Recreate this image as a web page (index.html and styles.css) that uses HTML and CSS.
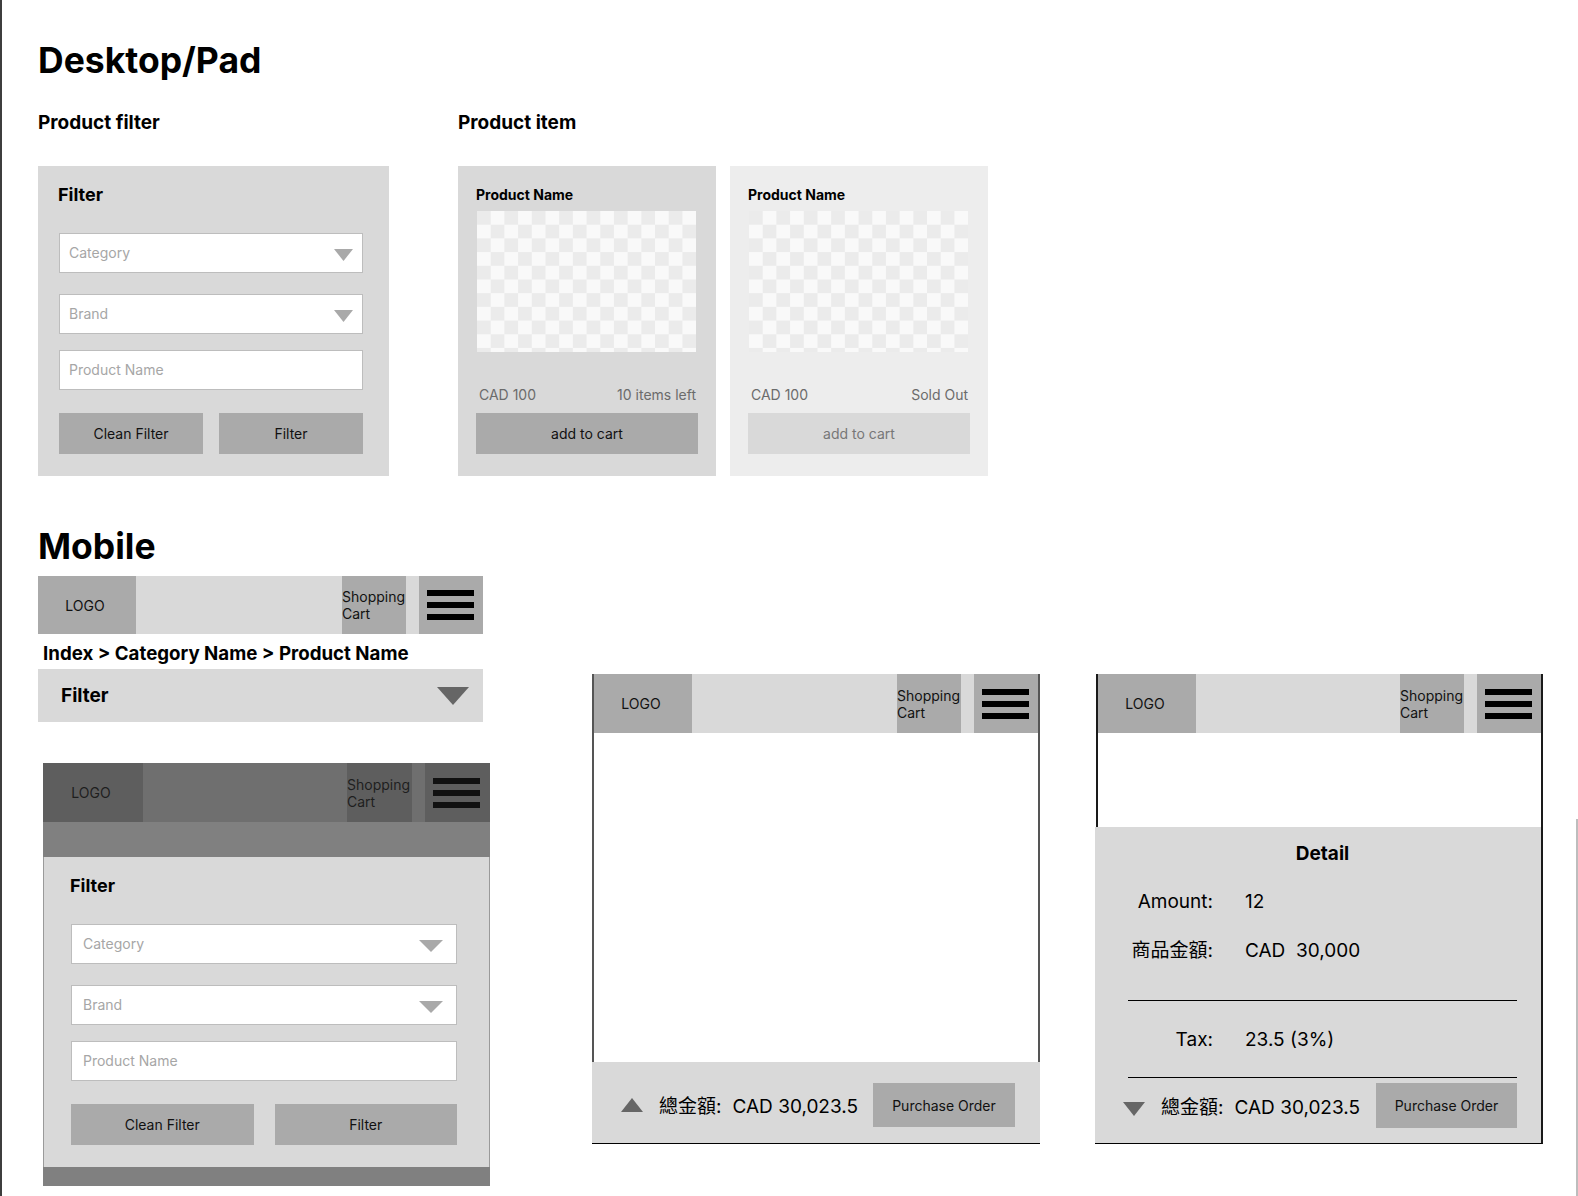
FILE: index.html
```html
<!DOCTYPE html>
<html lang="en">
<head>
<meta charset="utf-8">
<title>Wireframes</title>
<link rel="stylesheet" href="styles.css">
</head>
<body>
<div class="page">
  <h1 class="title">Desktop/Pad</h1>
  <div class="desk-row">
    <section class="desk-col">
      <h2 class="subtitle">Product filter</h2>
      <div class="filter-box">
        <div class="fb-title">Filter</div>
        <div class="field field-first"><span>Category</span><svg class="caret" width="19" height="12" viewBox="0 0 19 12"><polygon points="0,0 19,0 9.5,12" fill="#a9a9a9"/></svg></div>
        <div class="field field-second"><span>Brand</span><svg class="caret" width="19" height="12" viewBox="0 0 19 12"><polygon points="0,0 19,0 9.5,12" fill="#a9a9a9"/></svg></div>
        <div class="field field-third"><span>Product Name</span></div>
        <div class="fb-buttons">
          <div class="btn">Clean Filter</div>
          <div class="btn">Filter</div>
        </div>
      </div>
    </section>
    <section class="desk-col">
      <h2 class="subtitle">Product item</h2>
      <div class="cards">
        <div class="card">
          <div class="card-name">Product Name</div>
          <div class="card-img"></div>
          <div class="card-meta"><span>CAD 100</span><span>10 items left</span></div>
          <div class="btn card-btn">add to cart</div>
        </div>
        <div class="card card-soft">
          <div class="card-name">Product Name</div>
          <div class="card-img"></div>
          <div class="card-meta"><span>CAD 100</span><span>Sold Out</span></div>
          <div class="btn card-btn btn-disabled">add to cart</div>
        </div>
      </div>
    </section>
  </div>

  <h1 class="title title-mobile">Mobile</h1>
  <div class="mob-row">
    <div class="mob-left">
      <div class="topbar">
        <div class="tb-logo">LOGO</div>
        <div class="tb-space"></div>
        <div class="tb-cart">Shopping<br>Cart</div>
        <div class="tb-menu"><i></i><i></i><i></i></div>
      </div>
      <div class="crumb">Index &gt; Category Name &gt; Product Name</div>
      <div class="filterbar"><span>Filter</span><svg width="32" height="18" viewBox="0 0 32 18"><polygon points="0,0 32,0 16,18" fill="#666"/></svg></div>

      <div class="overlay">
        <div class="topbar topbar-dim">
          <div class="tb-logo">LOGO</div>
          <div class="tb-space"></div>
          <div class="tb-cart">Shopping<br>Cart</div>
          <div class="tb-menu"><i></i><i></i><i></i></div>
        </div>
        <div class="ov-band"></div>
        <div class="filter-box filter-box-mobile">
          <div class="fb-title">Filter</div>
          <div class="field field-first"><span>Category</span><svg class="caret" width="24" height="12" viewBox="0 0 24 12"><polygon points="0,0 24,0 12,12" fill="#a9a9a9"/></svg></div>
          <div class="field field-second"><span>Brand</span><svg class="caret" width="24" height="12" viewBox="0 0 24 12"><polygon points="0,0 24,0 12,12" fill="#a9a9a9"/></svg></div>
          <div class="field field-third"><span>Product Name</span></div>
          <div class="fb-buttons">
            <div class="btn">Clean Filter</div>
            <div class="btn">Filter</div>
          </div>
        </div>
        <div class="ov-bottom"></div>
      </div>
    </div>

    <div class="phone phone-cart">
      <div class="screen">
        <div class="topbar topbar-phone">
          <div class="tb-logo">LOGO</div>
          <div class="tb-space"></div>
          <div class="tb-cart">Shopping<br>Cart</div>
          <div class="tb-menu"><i></i><i></i><i></i></div>
        </div>
        <div class="screen-body body-tall"></div>
      </div>
      <div class="total-bar">
        <svg class="tri" width="22" height="14" viewBox="0 0 22 14"><polygon points="11,0 22,14 0,14" fill="#666"/></svg>
        <span class="t-label">總金額:</span><span class="t-val">CAD 30,023.5</span>
        <div class="btn order-btn">Purchase Order</div>
      </div>
    </div>

    <div class="phone phone-detail">
      <div class="screen screen-dark">
        <div class="topbar topbar-phone">
          <div class="tb-logo">LOGO</div>
          <div class="tb-space"></div>
          <div class="tb-cart">Shopping<br>Cart</div>
          <div class="tb-menu"><i></i><i></i><i></i></div>
        </div>
        <div class="screen-body body-short"></div>
      </div>
      <div class="detail">
        <div class="d-title">Detail</div>
        <div class="d-grid">
          <span class="d-label">Amount:</span><span>12</span>
          <span class="d-label">商品金額:</span><span>CAD&nbsp; 30,000</span>
        </div>
        <div class="d-line"></div>
        <div class="d-grid d-grid-tax">
          <span class="d-label">Tax:</span><span>23.5 (3%)</span>
        </div>
        <div class="d-line d-line-2"></div>
        <div class="d-total">
          <svg class="tri" width="22" height="14" viewBox="0 0 22 14"><polygon points="0,0 22,0 11,14" fill="#666"/></svg>
          <span class="t-label">總金額:</span><span class="t-val">CAD 30,023.5</span>
          <div class="btn order-btn order-btn-detail">Purchase Order</div>
        </div>
      </div>
    </div>

    <div class="edge"></div>
  </div>
</div>
</body>
</html>
```

FILE: styles.css
```css
* {
  box-sizing: border-box;
  margin: 0;
  padding: 0;
}

body {
  margin: 0;
  background: #fff;
  color: #000;
  font-family: Inter, "Noto Sans CJK TC", sans-serif;
}

.page {
  height: 1196px;
  overflow: hidden;
  border-left: 2px solid #3d3d3d;
  padding: 39px 0 0 36px;
  display: flex;
  flex-direction: column;
}

.title {
  font-size: 35.5px;
  line-height: 44px;
  font-weight: 700;
}

.title-mobile {
  margin-top: 49px;
  margin-bottom: 7px;
}

.subtitle {
  font-size: 19px;
  line-height: 24px;
  font-weight: 700;
  margin-top: 28px;
}

.desk-row {
  display: flex;
  gap: 69px;
}

/* Filter box */
.filter-box {
  margin-top: 31px;
  width: 351px;
  background: #d9d9d9;
  padding: 18px 26px 22px 20px;
}

.filter-box-mobile {
  margin-top: 0;
  width: 447px;
  padding: 18px 32px 22px 26px;
  border-left: 1px solid #9a9a9a;
  border-right: 1px solid #9a9a9a;
}

.fb-title {
  font-size: 18px;
  line-height: 22px;
  font-weight: 700;
}

.field {
  height: 40px;
  margin-left: 1px;
  background: #fff;
  border: 1px solid #bdbdbd;
  display: flex;
  align-items: center;
  justify-content: space-between;
  padding: 0 9px 2px 9px;
  font-size: 14px;
  color: #a6a6a6;
}

.filter-box-mobile .field {
  padding: 0 13px 2px 11px;
}

.caret {
  display: block;
  margin-top: 6px;
}

.field-first { margin-top: 27px; }
.field-second { margin-top: 21px; }
.field-third { margin-top: 16px; }

.fb-buttons {
  margin-top: 23px;
  margin-left: 1px;
  display: grid;
  grid-template-columns: 1fr 1fr;
  gap: 16px;
}

.filter-box-mobile .fb-buttons {
  gap: 21px;
}

.btn {
  height: 41px;
  background: #aaaaaa;
  display: flex;
  align-items: center;
  justify-content: center;
  font-size: 14px;
  color: #111;
}

/* Product cards */
.cards {
  margin-top: 31px;
  display: flex;
  gap: 14px;
}

.card {
  width: 258px;
  height: 310px;
  background: #d9d9d9;
  padding: 20px 18px 22px;
  display: flex;
  flex-direction: column;
}

.card-soft {
  background: #ededed;
}

.card-name {
  font-size: 14px;
  line-height: 17px;
  font-weight: 700;
}

.card-img {
  margin-top: 8px;
  margin-left: 1px;
  width: 219px;
  height: 141px;
  background-color: #f9f9f9;
  background-image: conic-gradient(transparent 25%, #ebebeb 0 50%, transparent 0 75%, #ebebeb 0);
  background-size: 27.4px 27.4px;
}

.card-meta {
  margin-top: 34px;
  padding: 0 2px 0 3px;
  display: flex;
  justify-content: space-between;
  font-size: 14px;
  line-height: 17px;
  color: #6b6b6b;
}

.card-btn {
  margin-top: 10px;
}

.btn-disabled {
  background: #d9d9d9;
  color: #777;
}

/* Mobile */
.mob-row {
  flex: 1;
  display: flex;
  align-items: flex-start;
}

.mob-left {
  width: 452px;
}

.topbar {
  width: 445px;
  height: 58px;
  display: flex;
  background: #d9d9d9;
}

.tb-logo {
  width: 98px;
  background: #aaaaaa;
  display: flex;
  align-items: center;
  justify-content: center;
  padding-right: 4px;
  font-size: 14px;
  color: #111;
}

.tb-space {
  flex: 1;
}

.tb-cart {
  width: 64px;
  background: #aaaaaa;
  display: flex;
  align-items: center;
  font-size: 14px;
  line-height: 17px;
  color: #111;
}

.tb-menu {
  width: 64px;
  margin-left: 13px;
  background: #aaaaaa;
  display: flex;
  flex-direction: column;
  justify-content: center;
  gap: 6px;
  padding-left: 8px;
}

.tb-menu i {
  display: block;
  width: 47px;
  height: 6px;
  background: #000;
}

.topbar-dim {
  width: 447px;
  height: 59px;
  background: #6f6f6f;
}

.topbar-dim .tb-logo,
.topbar-dim .tb-cart,
.topbar-dim .tb-menu {
  background: #5e5e5e;
  color: #1e1e1e;
}

.topbar-dim .tb-logo { width: 100px; }
.topbar-dim .tb-cart,
.topbar-dim .tb-menu { width: 65px; }
.topbar-dim .tb-menu i { background: #111; }

.crumb {
  margin-top: 8px;
  padding-left: 5px;
  font-size: 18.7px;
  line-height: 24px;
  font-weight: 700;
}

.filterbar {
  margin-top: 3px;
  width: 445px;
  height: 53px;
  background: #d9d9d9;
  display: flex;
  align-items: center;
  justify-content: space-between;
  padding: 0 14px 0 23px;
  font-size: 19px;
  font-weight: 700;
}

.filterbar svg {
  display: block;
  margin-top: 1px;
}

.overlay {
  margin-top: 41px;
  margin-left: 5px;
  width: 447px;
}

.ov-band {
  height: 35px;
  background: #808080;
}

.ov-bottom {
  height: 19px;
  background: #808080;
}

/* Phones */
.phone {
  margin-top: 98px;
}

.phone-cart {
  width: 448px;
  margin-left: 102px;
}

.phone-detail {
  width: 447px;
  margin-left: 56px;
}

.screen {
  border-left: 2px solid #555;
  border-right: 2px solid #555;
}

.screen-dark {
  border-left-color: #1a1a1a;
  border-right-color: #1a1a1a;
}

.topbar-phone {
  width: auto;
  height: 59px;
}

.screen-body {
  background: #fff;
}

.body-tall { height: 329px; }
.body-short { height: 94px; }

.total-bar {
  height: 82px;
  background: #d9d9d9;
  border-bottom: 1px solid #000;
  display: flex;
  align-items: center;
  padding: 5px 25px 0 29px;
}

.tri {
  display: block;
  flex: none;
}

.t-label {
  margin-left: 16px;
  margin-top: 4px;
  font-size: 19px;
  line-height: 24px;
}

.t-val {
  margin-left: 11px;
  margin-top: 4px;
  font-size: 19px;
  line-height: 24px;
}

.order-btn {
  margin-left: auto;
  width: 142px;
  height: 44px;
}

.order-btn-detail {
  width: 141px;
  height: 45px;
}

.detail {
  margin-left: -1px;
  width: 448px;
  background: #d9d9d9;
  border-right: 2px solid #1a1a1a;
  border-bottom: 1px solid #000;
  padding: 15px 24px 15px 33px;
  font-size: 19px;
  line-height: 24px;
}

.d-title {
  text-align: center;
  font-weight: 700;
}

.d-grid {
  margin-top: 24px;
  display: grid;
  grid-template-columns: 85px auto;
  column-gap: 32px;
  row-gap: 25px;
  justify-content: start;
}

.d-label {
  text-align: right;
}

.d-line {
  margin-top: 37px;
  height: 1px;
  background: #000;
}

.d-grid-tax {
  margin-top: 27px;
}

.d-line-2 {
  margin-top: 25px;
}

.d-total {
  margin-top: 5px;
  margin-left: -5px;
  display: flex;
  align-items: center;
}

.d-total .tri {
  margin-top: 6px;
}

.edge {
  margin-left: auto;
  margin-top: 243px;
  align-self: stretch;
  width: 2px;
  background: #bdbdbd;
}
```
